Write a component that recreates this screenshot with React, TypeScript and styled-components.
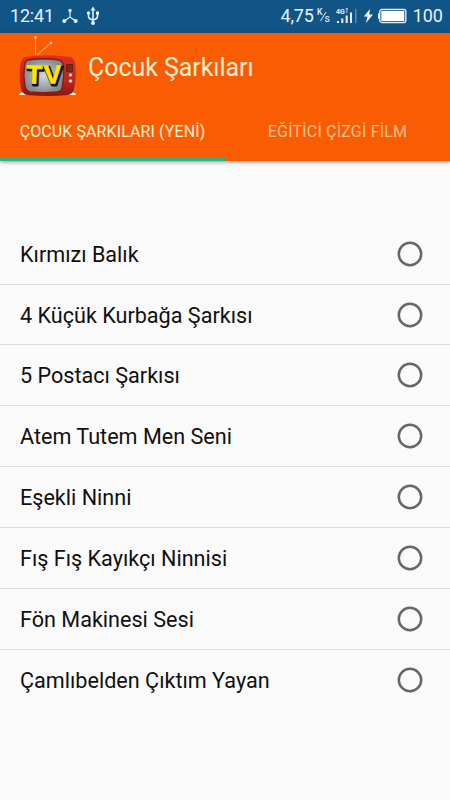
import React from "react";
import styled, { createGlobalStyle } from "styled-components";

const GlobalStyle = createGlobalStyle`
  * { box-sizing: border-box; }
  body { margin: 0; background: #fafafa; font-family: Roboto, "Noto Sans", sans-serif; }
`;

const Screen = styled.div`
  width: 450px;
  height: 800px;
  display: flex;
  flex-direction: column;
  overflow: hidden;
  background: #fafafa;
`;

const StatusBar = styled.div`
  height: 33px;
  flex: none;
  display: flex;
  align-items: center;
  justify-content: space-between;
  padding: 0 7px 1px 10px;
  background: #115587;
  color: #e4f3fc;
`;

const StatusGroup = styled.div`
  display: flex;
  align-items: center;
`;

const StatusText = styled.span<{ $spacing?: number }>`
  font-size: 18px;
  line-height: 32px;
  letter-spacing: ${(p) => p.$spacing ?? 0}px;
  white-space: nowrap;
`;

const StatusIcon = styled.svg<{ $gap: number }>`
  display: block;
  margin-left: ${(p) => p.$gap}px;
`;

const BatteryLevel = styled.span`
  margin-left: 6px;
`;

const Header = styled.header`
  height: 128px;
  flex: none;
  background: #fa5c04;
  box-shadow: 0 1px 4px rgba(0, 0, 0, 0.42);
`;

const TitleBar = styled.div`
  height: 70px;
  display: flex;
  padding-left: 18px;
`;

const Title = styled.h1`
  margin: 0 0 0 10px;
  font-size: 24.9px;
  font-weight: 400;
  line-height: 69px;
  color: #fff0d2;
`;

const Tabs = styled.nav`
  display: grid;
  grid-template-columns: 1fr 1fr;
  height: 58px;
`;

const Tab = styled.div<{ $active?: boolean }>`
  display: flex;
  justify-content: center;
  height: 58px;
  font-size: 16px;
  letter-spacing: ${(p) => (p.$active ? 0.1 : 0.2)}px;
  line-height: 58px;
  white-space: nowrap;
  color: ${(p) => (p.$active ? "#fff0d2" : "#fdc08a")};
  box-shadow: ${(p) => (p.$active ? "inset 0 -3px 0 #2fb48a" : "none")};
`;

const List = styled.ul`
  list-style: none;
  margin: 0;
  padding: 62.8px 0 0;
`;

const Row = styled.li`
  height: 60.83px;
  display: flex;
  align-items: center;
  justify-content: space-between;
  padding: 0 27px 0 20px;
  border-bottom: 1px solid #dedede;
  &:last-child { border-bottom-color: transparent; }
`;

const SongName = styled.span`
  padding-top: 2px;
  font-size: 21.6px;
  line-height: 30px;
  color: #101010;
  white-space: nowrap;
`;

const Radio = styled.svg`
  display: block;
  width: 26px;
  height: 26px;
`;

const TvLogo = () => (
  <svg width="60" height="70" viewBox="0 0 60 70">
    <defs>
      <linearGradient id="case" x1="0" y1="0" x2="0" y2="1">
        <stop offset="0" stopColor="#e0301f" />
        <stop offset="0.6" stopColor="#c3251b" />
        <stop offset="1" stopColor="#8d1512" />
      </linearGradient>
      <radialGradient id="glass">
        <stop offset="0" stopColor="#d5d8d8" />
        <stop offset="1" stopColor="#858b8d" />
      </radialGradient>
    </defs>
    <path d="M17.500 22V5M19 22L33 10" stroke="#f6b48c" strokeWidth="1" fill="none" />
    <circle cx="17.500" cy="4.500" r="1.300" fill="#ffd9c0" />
    <circle cx="33" cy="10" r="1.300" fill="#ffd9c0" />
    <path d="M1 62q1-3 6-3h46q5 1 5 3z" fill="#fff3e8" />
    <path d="M7 24Q30 20.500 52 24Q57 25 57.500 33Q58.500 46 56 56Q55 61 50 62Q30 64 9 62Q4 61 3 55Q0.500 42 2.500 31Q3.500 25 7 24Z" fill="url(#case)" />
    <path d="M10 27Q26 24.500 41 27Q45 28 45.500 33Q46.500 44 44 55Q43 58.500 39 59Q26 60.500 12 59Q8 58 7 53Q5 43 6.500 33Q7 28 10 27Z" fill="url(#glass)" stroke="#7f1c16" strokeWidth="1.300" />
    <rect x="48" y="31" width="7" height="8" rx="1" fill="#672013" />
    <path d="M49 33h5M49 35h5M49 37h5" stroke="#a44a32" strokeWidth=".6" />
    <circle cx="52.500" cy="42" r="2.100" fill="#e6cfc9" stroke="#84221b" strokeWidth=".6" />
    <circle cx="52.500" cy="48" r="2.100" fill="#e6cfc9" stroke="#84221b" strokeWidth=".6" />
    <g fontFamily="Liberation Sans" fontWeight="700" fontSize="26" strokeLinejoin="round">
      <g fill="#111" stroke="#111" strokeWidth="3">
        <text x="9.500" y="52" transform="rotate(2 18 44)">T</text>
        <text x="27.300" y="52" transform="rotate(-2 34 44)">V</text>
      </g>
      <g fill="#ffe500" stroke="#ffe500" strokeWidth=".7">
        <text x="8.300" y="50.500" transform="rotate(2 18 44)">T</text>
        <text x="26" y="50.500" transform="rotate(-2 34 44)">V</text>
      </g>
    </g>
  </svg>
);

const HubIcon = () => (
  <StatusIcon $gap={8} width="16" height="16" viewBox="0 0 16 16">
    <path d="M8 2.500V9L2.500 13M8 9L13.500 13" stroke="#e4f3fc" strokeWidth="1.200" fill="none" />
    <g fill="#e4f3fc">
      <circle cx="8" cy="2.500" r="1.700" />
      <circle cx="2.300" cy="13" r="2" />
      <circle cx="13.700" cy="13" r="2" />
    </g>
  </StatusIcon>
);

const UsbIcon = () => (
  <StatusIcon $gap={8} width="14" height="20" viewBox="0 0 14 20">
    <path d="M7 3V17M2.500 7V10.500Q2.500 13 7 14M11.500 7V10.500Q11.500 13 7 14" stroke="#e4f3fc" strokeWidth="1.600" fill="none" />
    <g fill="#e4f3fc">
      <path d="M7 .5L9.500 4.500H4.500Z" />
      <circle cx="2.500" cy="7" r="1.700" />
      <rect x="10" y="5.500" width="3" height="3" />
      <circle cx="7" cy="17" r="2" />
    </g>
  </StatusIcon>
);

const SpeedUnit = () => (
  <StatusIcon $gap={3} width="14" height="18" viewBox="0 0 14 18" fill="#e4f3fc">
    <text x="0" y="7.500" fontFamily="Roboto" fontSize="8.500" fontWeight="500">K</text>
    <path d="M3.500 14L9 5" stroke="#e4f3fc" strokeWidth="1" />
    <text x="7.500" y="15" fontFamily="Roboto" fontSize="10.500">s</text>
  </StatusIcon>
);

const SignalIcon = () => (
  <StatusIcon $gap={5} width="22" height="18" viewBox="0 0 22 18" fill="#e4f3fc">
    <text x="0" y="6.500" fontFamily="Roboto" fontSize="7" fontWeight="700">4G</text>
    <path d="M10.800 1v5M9.600 2.500l1.200-1.500 1.200 1.500" stroke="#e4f3fc" strokeWidth=".7" fill="none" />
    <rect x="1" y="14" width="2" height="2" />
    <rect x="5.300" y="11.500" width="2" height="4.500" />
    <rect x="9.700" y="8.500" width="2" height="7.500" />
    <rect x="14" y="5.500" width="2" height="10.500" />
    <rect x="19" y="2" width="1.500" height="14" opacity=".35" />
  </StatusIcon>
);

const BoltIcon = () => (
  <StatusIcon $gap={5} width="11" height="16" viewBox="0 0 11 16">
    <path d="M7 1L.8 8.500H4.500L3 15L10 6.500H6.200Z" fill="#fff" />
  </StatusIcon>
);

const BatteryIcon = () => (
  <StatusIcon $gap={4} width="29" height="16" viewBox="0 0 29 16">
    <rect x="0" y="5" width="2" height="6" rx="1" fill="#e4f3fc" />
    <rect x="1.800" y="1.500" width="26" height="13" rx="2" fill="#123f63" stroke="#e4f3fc" strokeWidth="1.300" />
    <rect x="3.300" y="3" width="23" height="10" fill="#fff" />
  </StatusIcon>
);

const songs = [
  "Kırmızı Balık",
  "4 Küçük Kurbağa Şarkısı",
  "5 Postacı Şarkısı",
  "Atem Tutem Men Seni",
  "Eşekli Ninni",
  "Fış Fış Kayıkçı Ninnisi",
  "Fön Makinesi Sesi",
  "Çamlıbelden Çıktım Yayan",
];

export default function App() {
  return (
    <Screen>
      <GlobalStyle />
      <StatusBar>
        <StatusGroup>
          <StatusText $spacing={-0.2}>12:41</StatusText>
          <HubIcon />
          <UsbIcon />
        </StatusGroup>
        <StatusGroup>
          <StatusText $spacing={-0.2}>4,75</StatusText>
          <SpeedUnit />
          <SignalIcon />
          <BoltIcon />
          <BatteryIcon />
          <BatteryLevel>
            <StatusText>100</StatusText>
          </BatteryLevel>
        </StatusGroup>
      </StatusBar>
      <Header>
        <TitleBar>
          <TvLogo />
          <Title>Çocuk Şarkıları</Title>
        </TitleBar>
        <Tabs>
          <Tab $active>ÇOCUK ŞARKILARI (YENİ)</Tab>
          <Tab>EĞİTİCİ ÇİZGİ FİLM</Tab>
        </Tabs>
      </Header>
      <List>
        {songs.map((name) => (
          <Row key={name}>
            <SongName>{name}</SongName>
            <Radio viewBox="0 0 26 26">
              <circle cx="13" cy="13" r="11.200" fill="none" stroke="#666" strokeWidth="2.500" />
            </Radio>
          </Row>
        ))}
      </List>
    </Screen>
  );
}
